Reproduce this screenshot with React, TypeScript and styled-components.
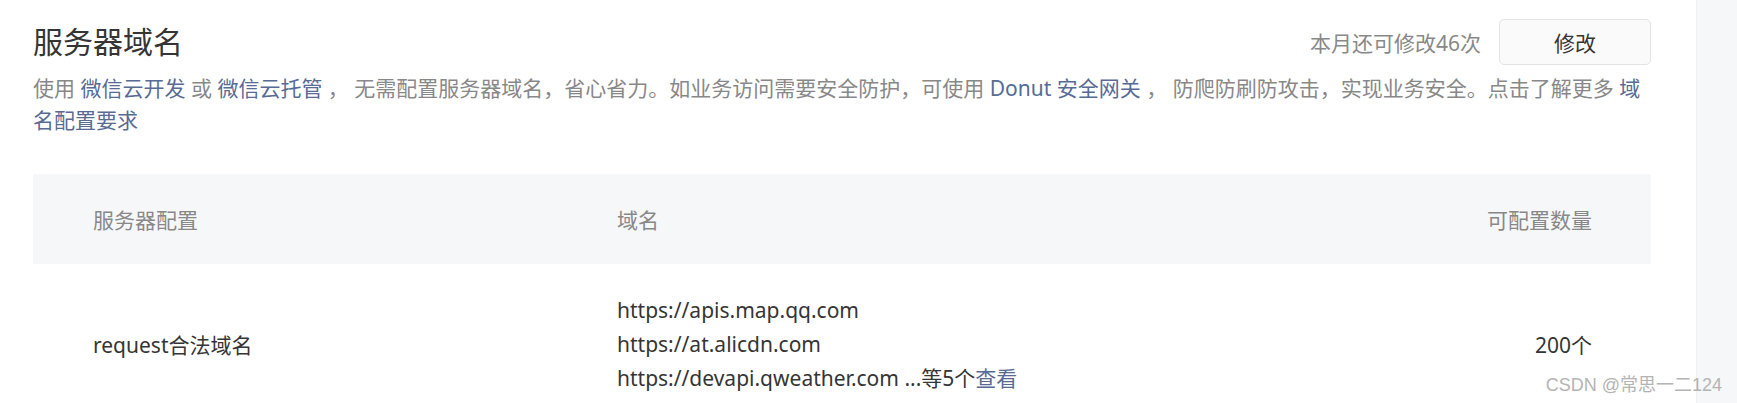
import styled, { createGlobalStyle } from "styled-components";

const linkColor = "#576b95";

const GlobalStyle = createGlobalStyle`
  body {
    margin: 0;
    background: #fff;
    font-family: "Noto Sans", "Noto Sans CJK SC", sans-serif;
  }
`;

const Page = styled.div`
  display: flex;
  height: 403px;
  overflow: hidden;
  position: relative;
`;

const Main = styled.main`
  flex: 1;
  padding: 19px 45px 0 33px;
  box-sizing: border-box;
`;

const Side = styled.aside`
  width: 40px;
  background: #f6f7f9;
  border-left: 1px solid #f0f1f3;
`;

const Head = styled.div`
  display: flex;
  align-items: center;
  justify-content: space-between;
  height: 46px;
`;

const Title = styled.h2`
  margin: 0;
  font-size: 30px;
  font-weight: 400;
  color: #353535;
  line-height: 46px;
`;

const Quota = styled.div`
  display: flex;
  align-items: center;
  gap: 18px;
  font-size: 21px;
  color: #888;
`;

const Button = styled.button`
  width: 152px;
  height: 46px;
  border: 1px solid #e4e4e4;
  border-radius: 5px;
  background: #fafafa;
  color: #353535;
  font-family: inherit;
  font-size: 21px;
  cursor: pointer;
`;

const Desc = styled.p`
  margin: 7px 0 0;
  font-size: 21px;
  line-height: 32px;
  color: #888;
`;

const Link = styled.a`
  color: ${linkColor};
  text-decoration: none;
  cursor: pointer;
`;

const Table = styled.div`
  margin-top: 38px;
`;

const Row = styled.div<{ $head?: boolean }>`
  display: grid;
  grid-template-columns: 524px 1fr auto;
  align-items: center;
  padding: ${({ $head }) => ($head ? "0 59px 0 60px" : "29px 59px 29px 60px")};
  height: ${({ $head }) => ($head ? "90px" : "auto")};
  box-sizing: border-box;
  background: ${({ $head }) => ($head ? "#f6f7f9" : "transparent")};
  color: ${({ $head }) => ($head ? "#888" : "#353535")};
  font-size: 21px;
`;

const Cell = styled.div<{ $right?: boolean }>`
  text-align: ${({ $right }) => ($right ? "right" : "left")};
`;

const Urls = styled.div`
  line-height: 34px;
`;

const Watermark = styled.div`
  position: absolute;
  right: 15px;
  bottom: 7px;
  font-family: "Liberation Sans", "Noto Sans CJK SC", sans-serif;
  font-size: 18px;
  color: #b4b4b4;
`;

const urls = [
  "https://apis.map.qq.com",
  "https://at.alicdn.com",
  "https://devapi.qweather.com",
];

export default function App() {
  return (
    <Page>
      <GlobalStyle />
      <Main>
        <Head>
          <Title>服务器域名</Title>
          <Quota>
            本月还可修改46次
            <Button>修改</Button>
          </Quota>
        </Head>
        <Desc>
          使用 <Link>微信云开发</Link> 或 <Link>微信云托管</Link> ，
          无需配置服务器域名，省心省力。如业务访问需要安全防护，可使用{" "}
          <Link>Donut 安全网关</Link> ， 防爬防刷防攻击，实现业务安全。点击了解更多{" "}
          <Link>域名配置要求</Link>
        </Desc>
        <Table>
          <Row $head>
            <Cell>服务器配置</Cell>
            <Cell>域名</Cell>
            <Cell $right>可配置数量</Cell>
          </Row>
          <Row>
            <Cell>request合法域名</Cell>
            <Urls>
              {urls.map((u, i) => (
                <div key={u}>
                  {u}
                  {i === urls.length - 1 && (
                    <>
                      {" "}...等5个<Link>查看</Link>
                    </>
                  )}
                </div>
              ))}
            </Urls>
            <Cell $right>200个</Cell>
          </Row>
        </Table>
      </Main>
      <Side />
      <Watermark>CSDN @常思一二124</Watermark>
    </Page>
  );
}
